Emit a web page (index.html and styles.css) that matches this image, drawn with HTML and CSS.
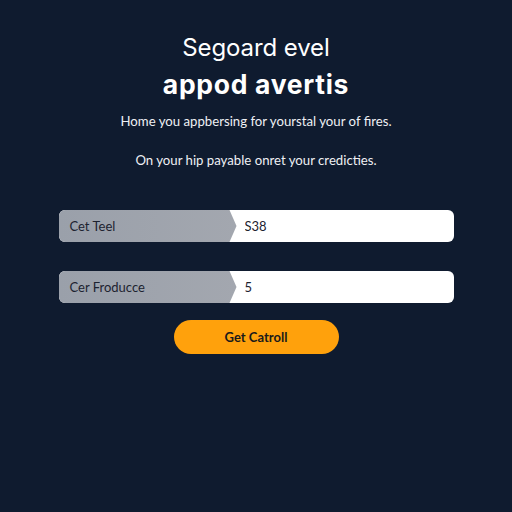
FILE: index.html
```html
<!DOCTYPE html>
<html lang="en">
<head>
    <meta charset="UTF-8">
    <meta name="viewport" content="width=device-width, initial-scale=1.0">
    <title>Segoard evel</title>
    <link rel="stylesheet" href="styles.css">
</head>
<body>
    <div class="page">
        <h1 class="title">Segoard evel</h1>
        <h2 class="subtitle">appod avertis</h2>

        <p class="lead">Home you appbersing for yourstal your of fires.</p>
        <p class="note">On your hip payable onret your credicties.</p>

        <div class="field">
            <label class="field-label" for="costTeel">Cet Teel</label>
            <input class="field-input" type="text" id="costTeel" value="S38">
        </div>

        <div class="field">
            <label class="field-label" for="costProduce">Cer Froducce</label>
            <input class="field-input" type="text" id="costProduce" value="5">
        </div>

        <button class="action">Get Catroll</button>
    </div>
</body>
</html>
```

FILE: styles.css
```css
body {
    margin: 0;
    background: #0f1b2f;
    font-family: 'Lato', 'Liberation Sans', sans-serif;
    color: #ffffff;
}

.page {
    width: 512px;
    height: 512px;
    display: flex;
    flex-direction: column;
    align-items: center;
    padding-top: 33px;
    box-sizing: border-box;
}

.title,
.subtitle {
    font-family: 'Inter', 'Lato', sans-serif;
}

.title {
    margin: 0;
    font-size: 24px;
    font-weight: 400;
    line-height: 30px;
    letter-spacing: -0.1px;
}

.subtitle {
    margin: 5px 0 0 0;
    font-size: 26.5px;
    font-weight: 700;
    line-height: 32px;
    letter-spacing: 0.7px;
}

.lead,
.note {
    margin: 0;
    font-size: 13.2px;
    line-height: 18px;
    color: #eef0f4;
}

.lead {
    margin-top: 12px;
}

.note {
    margin-top: 21px;
}

.field {
    width: 395px;
    height: 32px;
    display: flex;
    border-radius: 6px;
    background: #ffffff;
    overflow: hidden;
    margin-top: 29px;
}

.field:first-of-type {
    margin-top: 41px;
}

.field-label {
    width: 178px;
    padding-left: 11px;
    box-sizing: border-box;
    display: flex;
    align-items: center;
    background: linear-gradient(90deg, #9aa0aa, #a3a7af);
    clip-path: polygon(0 0, 171px 0, 178px 50%, 171px 100%, 0 100%);
    color: #1d2330;
    font-size: 13px;
}

.field-input {
    flex: 1;
    border: none;
    outline: none;
    padding: 0 0 0 8px;
    font-family: inherit;
    font-size: 13px;
    color: #1d2330;
    background: transparent;
}

.action {
    margin-top: 17px;
    width: 165px;
    height: 34px;
    border: none;
    border-radius: 17px;
    background: #ffa10c;
    color: #1a1a1a;
    font-family: inherit;
    font-size: 13px;
    font-weight: 700;
    cursor: pointer;
}
```
